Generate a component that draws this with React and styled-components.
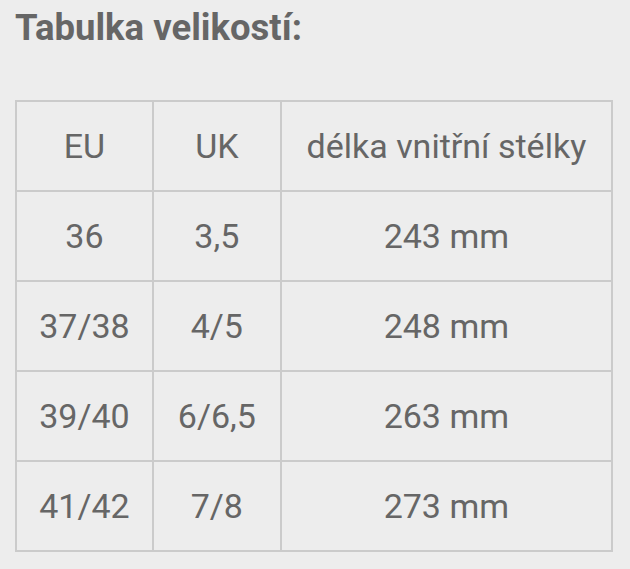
import React from "react";
import styled, { createGlobalStyle } from "styled-components";

const Global = createGlobalStyle`
  html, body { margin: 0; padding: 0; background: #ededed; }
  body { font-family: Roboto, "Liberation Sans", sans-serif; }
`;

const Page = styled.div`
  padding: 4px 15px 0 15px;
  width: 630px;
  height: 569px;
  box-sizing: border-box;
`;

const Title = styled.h2`
  margin: 0;
  font-size: 36.5px;
  line-height: 48px;
  font-weight: 700;
  color: #666666;
`;

const Table = styled.table`
  margin-top: 48px;
  border-collapse: collapse;
  width: 598px;
  color: #666666;
  font-size: 34px;
`;

const Cell = styled.td`
  border: 2px solid #cbcbcb;
  height: 88px;
  padding: 0;
  text-align: center;
  vertical-align: middle;
  font-weight: 400;
  width: ${(p) => p.$w}px;
`;

const widths = [136, 127, 335];
const rows = [
  ["EU", "UK", "délka vnitřní stélky"],
  ["36", "3,5", "243 mm"],
  ["37/38", "4/5", "248 mm"],
  ["39/40", "6/6,5", "263 mm"],
  ["41/42", "7/8", "273 mm"],
];

export default function App() {
  return (
    <>
      <Global />
      <Page>
        <Title>Tabulka velikostí:</Title>
        <Table>
          <tbody>
            {rows.map((r, i) => (
              <tr key={i}>
                {r.map((c, j) => (
                  <Cell key={j} $w={widths[j]}>
                    {c}
                  </Cell>
                ))}
              </tr>
            ))}
          </tbody>
        </Table>
      </Page>
    </>
  );
}
